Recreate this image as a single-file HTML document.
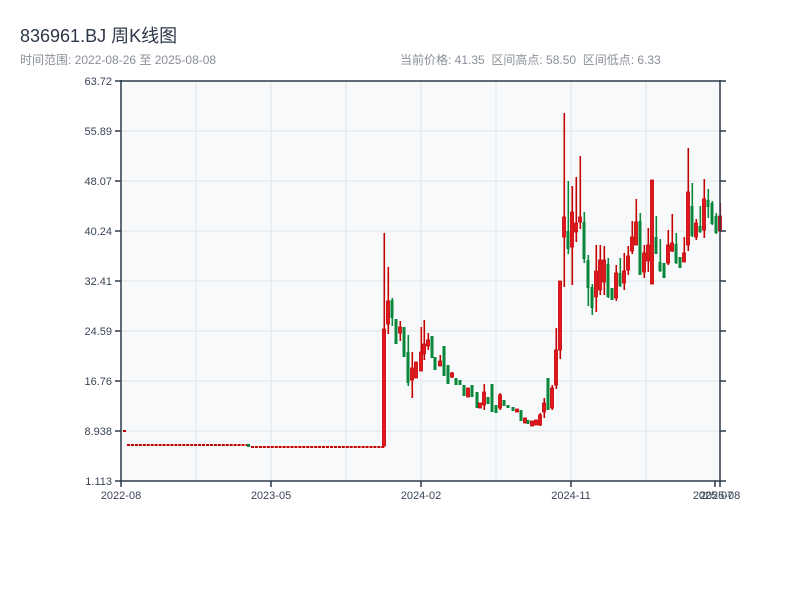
<!DOCTYPE html>
<html><head><meta charset="utf-8"><style>
body{margin:0;width:800px;height:600px;background:#fff;font-family:"Liberation Sans","Noto Sans CJK SC",sans-serif;overflow:hidden}
.t{position:absolute;left:20px;top:22px;font-size:18px;color:#2d3748}
.s{position:absolute;top:51px;font-size:12px;color:#8a8f98}
</style></head><body>
<div class="t">836961.BJ 周K线图</div>
<div class="s" style="left:20px">时间范围: 2022-08-26 至 2025-08-08</div>
<div class="s" style="left:400px">当前价格: 41.35&nbsp;&nbsp;区间高点: 58.50&nbsp;&nbsp;区间低点: 6.33</div>
<svg id="c" width="800" height="600" style="position:absolute;left:0;top:0" font-family="Liberation Sans, sans-serif" font-size="11" fill="#3a4556">
<rect x="121" y="81" width="599" height="400" fill="#f7f9fb"/>
<g stroke="#e2e5ea" stroke-width="1">
<line x1="196" y1="81" x2="196" y2="481"/><line x1="271" y1="81" x2="271" y2="481"/><line x1="346" y1="81" x2="346" y2="481"/><line x1="421" y1="81" x2="421" y2="481"/><line x1="496" y1="81" x2="496" y2="481"/><line x1="571" y1="81" x2="571" y2="481"/><line x1="646" y1="81" x2="646" y2="481"/>
<line x1="121" y1="131" x2="720" y2="131"/><line x1="121" y1="181" x2="720" y2="181"/><line x1="121" y1="231" x2="720" y2="231"/><line x1="121" y1="281" x2="720" y2="281"/><line x1="121" y1="331" x2="720" y2="331"/><line x1="121" y1="381" x2="720" y2="381"/><line x1="121" y1="431" x2="720" y2="431"/>
</g>
<g id="k"></g>
<g stroke="#2d3a4a" stroke-width="1.5" fill="none">
<line x1="121" y1="80" x2="121" y2="482"/><line x1="720" y1="80" x2="720" y2="482"/><line x1="120" y1="81" x2="721" y2="81"/><line x1="120" y1="481" x2="721" y2="481"/>
<path d="M115 81H121M115 131H121M115 181H121M115 231H121M115 281H121M115 331H121M115 381H121M115 431H121M115 481H121"/>
<path d="M720 81H726M720 131H726M720 181H726M720 231H726M720 281H726M720 331H726M720 381H726M720 431H726M720 481H726"/>
<path d="M121 481V487M271 481V487M421 481V487M571 481V487M715 481V487M720 481V487"/>
</g>
<g text-anchor="end">
<text x="112" y="85">63.72</text><text x="112" y="135">55.89</text><text x="112" y="185">48.07</text><text x="112" y="235">40.24</text><text x="112" y="285">32.41</text><text x="112" y="335">24.59</text><text x="112" y="385">16.76</text><text x="112" y="435">8.938</text><text x="112" y="485">1.113</text>
</g>
<g text-anchor="middle">
<text x="121" y="499">2022-08</text><text x="271" y="499">2023-05</text><text x="421" y="499">2024-02</text><text x="571" y="499">2024-11</text><text x="713" y="499">2025-07</text><text x="720" y="499">2025-08</text>
</g>
</svg>
<script>
var R="#c40000",RF="#e0181e",G="#08873a";
var d=[
[384,233,446,329,446,'r'],[388,267,334,301,324,'r'],[392,298,326,300,318,'g'],[396,319,344,319,344,'g'],[400,321,341,327,333,'r'],[404,327,357,327,357,'g'],[408,335,386,352,383,'g'],[412,352,398,368,380,'r'],[416,362,378,362,378,'r'],[421,327,370,352,371,'r'],[424,320,360,344,354,'r'],[428,333,350,340,346,'r'],[432,336,358,336,358,'g'],[435,357,370,357,370,'g'],[440,355,366,361,366,'r'],[444,346,376,346,376,'g'],[448,365,384,365,384,'g'],[452,372,378,373,377,'r'],[456,378,385,378,385,'g'],[460,380,385,380,385,'g'],[464,385,396,385,396,'g'],[468,388,397,388,397,'r'],[472,385,397,385,397,'g'],[477,392,408,392,408,'g'],[480,403,408,403,408,'r'],[484,384,410,392,405,'r'],[488,397,404,397,404,'g'],[492,384,412,384,412,'g'],[496,405,413,405,413,'g'],[500,393,410,395,408,'r'],[504,400,406,400,406,'g'],[508,405,408,405,408,'g'],[513,407,411,407,411,'g'],[517,409,412,409,412,'r'],[521,410,421,410,421,'g'],[525,418,423,418,423,'r'],[528,420,424,420,424,'g'],[532,421,426,421,426,'r'],[536,420,425,420,425,'r'],[540,413,426,415,425,'r'],[544,398,418,403,412,'r'],[548,378,410,378,410,'g'],[552,385,410,388,408,'r'],[556,328,389,350,385,'r'],[560,281,359,281,350,'r'],
[564,113,287,217,237,'r'],[568,181,254,231,249,'g'],[572,186,285,212,247,'r'],[576,177,242,223,232,'r'],[580,156,229,217,222,'r'],[584,212,263,222,259,'g'],[588,255,306,260,288,'g'],[592,284,315,287,308,'g'],[596,245,312,271,297,'r'],[600,245,295,260,290,'r'],[604,246,295,260,282,'r'],[608,258,298,264,297,'g'],[612,288,300,288,300,'g'],[616,265,301,273,298,'r'],[620,258,287,273,286,'g'],[624,253,290,271,283,'r'],[628,246,275,256,270,'r'],[632,221,254,237,251,'r'],[636,199,243,222,245,'r'],[640,213,275,221,275,'g'],[644,245,278,253,272,'r'],[648,228,272,245,261,'r'],[652,180,284,180,284,'r'],[656,216,254,237,254,'g'],[660,239,272,262,271,'g'],[664,263,278,263,278,'g'],[668,230,265,245,263,'r'],[672,214,252,243,251,'r'],[676,233,264,244,263,'g'],[680,257,268,257,268,'g'],[684,237,262,253,262,'r'],[688,148,251,192,245,'r'],[692,183,237,206,236,'g'],[696,219,240,223,237,'r'],[700,206,233,226,232,'g'],[704,179,238,199,230,'r'],[708,189,218,200,207,'g'],[712,201,225,203,224,'g'],[716,213,234,216,233,'g'],[720,203,232,216,231,'r']];
var s='';
s+='<rect x="123" y="430" width="3" height="2" fill="'+R+'"/>';
for(var x=127;x<246;x+=3.95)s+='<rect x="'+x.toFixed(1)+'" y="444" width="3" height="2" fill="'+R+'"/>';
s+='<rect x="247" y="444" width="3" height="3" fill="'+G+'"/>';
for(var x=251;x<382;x+=3.95)s+='<rect x="'+x.toFixed(1)+'" y="446" width="3" height="2" fill="'+R+'"/>';
d.forEach(function(c){var col=c[5]=='r'?R:G;
s+='<rect x="'+(c[0]-0.5)+'" y="'+c[1]+'" width="1.6" height="'+(c[2]-c[1])+'" fill="'+col+'"/>';
s+='<rect x="'+(c[0]-1.5)+'" y="'+c[3]+'" width="3" height="'+Math.max(2,c[4]-c[3])+'" fill="'+(c[5]=='r'?RF:G)+'" stroke="'+col+'" stroke-width="'+(c[5]=='r'?0.8:0)+'"/>';});
document.getElementById('k').innerHTML=s;
</script>
</body></html>
